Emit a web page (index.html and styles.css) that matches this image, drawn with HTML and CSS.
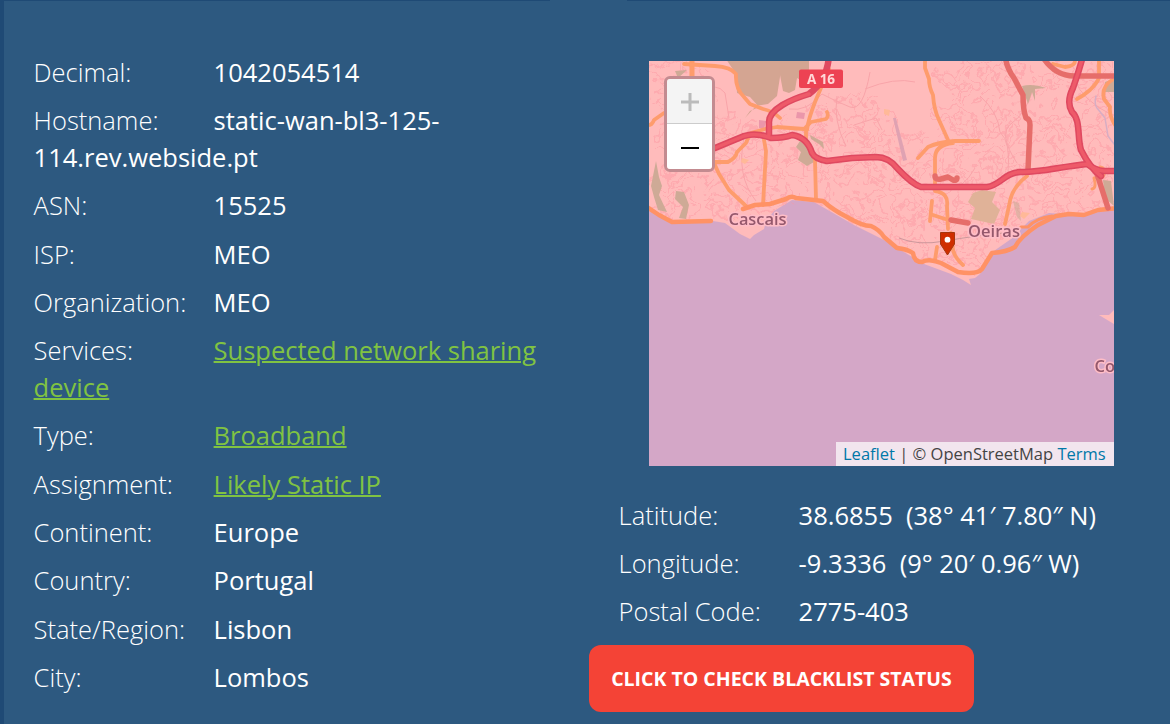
FILE: index.html
```
<!DOCTYPE html>
<html lang="en">
<head>
<meta charset="utf-8">
<title>IP Details</title>
<link rel="stylesheet" href="styles.css">
</head>
<body>
<main class="panel">
  <section class="details">
    <p class="row"><span class="label">Decimal:</span><span>1042054514</span></p>
    <p class="row"><span class="label">Hostname:</span><span>static-wan-bl3-125-<br>114.rev.webside.pt</span></p>
    <p class="row"><span class="label">ASN:</span><span>15525</span></p>
    <p class="row"><span class="label">ISP:</span><span>MEO</span></p>
    <p class="row"><span class="label">Organization:</span><span>MEO</span></p>
    <p class="row"><span class="label">Services:</span><a href="#">Suspected network sharing device</a></p>
    <p class="row"><span class="label">Type:</span><a href="#">Broadband</a></p>
    <p class="row"><span class="label">Assignment:</span><a href="#">Likely Static IP</a></p>
    <p class="row"><span class="label">Continent:</span><span>Europe</span></p>
    <p class="row"><span class="label">Country:</span><span>Portugal</span></p>
    <p class="row"><span class="label">State/Region:</span><span>Lisbon</span></p>
    <p class="row"><span class="label">City:</span><span>Lombos</span></p>
  </section>
  <section class="location">
    <div class="map">
      <svg class="tiles" width="465" height="405" viewBox="0 0 465 405">
        <defs>
          <pattern id="streets" width="47" height="43" patternUnits="userSpaceOnUse">
            <path d="M2 5l8 3 3 8-5 6 7 5 9-3 2 9-8 6M10 8l9-5 8 4 1 9-8 5-7-5M27 7l9-3 7 6-4 7 6 6-8 5-5-4-4 5-6-4M37 28l5 6-6 6-7-5 3-7M5 29l-3 6 7 4 6-5M20 21l5 3M36 12l-5 4" fill="none" stroke="#fc98a2" stroke-width="2"/>
          </pattern>
          <filter id="warp" x="0" y="0" width="1" height="1">
            <feTurbulence type="fractalNoise" baseFrequency=".045" numOctaves="3" seed="4"/>
            <feDisplacementMap in="SourceGraphic" scale="46" xChannelSelector="R" yChannelSelector="G"/>
            <feGaussianBlur stdDeviation=".5"/>
          </filter>
          <filter id="soft" x="0" y="0" width="1" height="1"><feGaussianBlur stdDeviation=".55"/></filter>
          <clipPath id="land"><path d="M0 0H465V148L428 154 400 152 380 157 360 172 342 191 330 217 316 221 293 211 275 203 235 179 205 164 165 141 130 145 105 171 92 171 76 161 58 161 22 160 0 148Z"/></clipPath>
        </defs>
        <rect width="465" height="405" fill="#d4a7c7"/>
        <g filter="url(#soft)">
        <path d="M-5 -5H470V148L428 154 400 152 380 160 362 178 342 192 331 213 326 217 320 218 322 224 314 219 302 213 275 203 235 179 205 164 165 141 143 139 125 150 117 160 115 168 105 174 101 178 91 173 76 162 64 160 22 160 -5 146Z" fill="#ffbbbb"/>
        <g clip-path="url(#land)">
          <g fill="url(#streets)" opacity=".45" filter="url(#warp)">
            <path d="M0 60L65 55 160 70 155 133 105 172 62 160 18 160 0 145Z"/>
            <path d="M160 42L220 28 255 60 290 95 315 215 275 205 162 137Z"/>
            <path d="M290 0H465V155L365 170 330 215 290 205Z"/>
            <path d="M0 0H50L80 55 0 80Z"/>
          </g>
          <g fill="none" stroke="#f8a4a9" stroke-width="1">
            <path d="M58 33q8-13 18-1l4 25M140 48q18 3 33-15q15 8 28 13t20-35M188 35q-4 25 9 50M216 28q30-12 50-7M205 64l22-7 6 12M331 35q18 16 20 36q11 10 8 40M385 24q-7 28-22 38t5 40M425 18q9 22 38 36M326 107q-5 10-15 18M95 77q-8 38 12 63"/>
            <path d="M250 177q19 8 46 3t68-9" stroke="#cc979b"/>
          </g>
          <g fill="#d4a592">
            <path d="M75 -5H133L131 16 128 35 119 43 107 45 96 57 101 50 110 46 101 36 88 32 87 13Z"/>
            <path d="M130 -5H160V25L153 20 148 17 146 29 140 32 134 30 131 14Z"/>
          </g>
          <g fill="#ceaa96">
            <path d="M7 100L10 116 13 125 10 134 18 151 9 149 5 136 2 125Z"/>
            <path d="M27 130L35 131 40 144 37 158 30 157 34 146 26 138Z"/>
            <path d="M151 80L162 88 165 101 158 105 149 99 152 91 147 86Z"/>
            <path d="M26 10L38 9 29 17Z"/>
            <path d="M161 74l13 7 1 7-5-5-8-5Z"/>
            <path d="M373 25Q384 22 397 27L386 28 386 40 383 31 379 43 376 34Z"/>
            <path d="M456 21L470 16V31H456ZM454 119L462 120 465 145 456 137Z"/>
            <path d="M364 140l6 2 2 18-4-4Z" opacity=".6"/>
          </g>
          <path d="M324 132L333 129 347 131 343 141 351 149 345 163 322 158 326 147 319 141Z" fill="#e0b298"/>
          <path d="M244 57l3 0 11 42-4 1Z" fill="#dfa2b2"/>
          <path d="M148 51l8 1-1 6-8-1ZM110 59l7 1-2 8-5-1Z" fill="#eb96aa"/>
          <path d="M235 48l6 1-1 6-5-2ZM93 97l7 2-4 4-4-2ZM373 151l8 1-6 6-4-3Z" fill="#ffb998"/>
        </g>
        <g fill="none" stroke-linecap="round" stroke-linejoin="round">
          <g stroke="#fe9c6c" stroke-width="3.8">
            <path d="M43 -5V18" stroke-width="5"/>
            <path d="M35 3L66 5Q82 6 87 13Q86 27 95 36L101 43 114 48Q124 50 131 57"/>
            <path d="M0 64Q3 64 5 59L15 52M66 101L79 101Q87 97 88 91L97 82Q99 76 102 72L116 68 128 66 155 68 162 61 177 58Q180 55 178 51"/>
            <path d="M180 8L166 41Q159 59 158 69M157 69L157 79 166 99 167 139"/>
            <path d="M115 79L117 90 114 144M66 104L70 113 80 129 97 145"/>
            <path d="M269 97L279 86Q290 81 306 80L330 80M304 82Q286 84 286 97L286 130Q300 132 298 145L299 168M276 -5V7L280 18Q280 26 284 34 285 49 290 59L299 79M283 140L281 160M284 154L299 159"/>
            <path d="M378 115Q362 127 360 145L356 163M450 -5L450 17Q448 22 441 29 434 35 428 38M463 19Q452 26 455 38L461 46Q460 56 468 67"/>
            <path d="M404 3L416 6Q426 5 426 0M288 186L286 199M302 172L304 189Q306 197 314 204"/>
            <path d="M451 106Q458 107 454 116L445 117Q448 127 443 128" stroke-width="3"/>
          </g>
          <g stroke="#ff9265" stroke-width="4.5">
            <path d="M-5 144L10 154 23 161 62 160M94 148L106 144 121 143 137 138Q142 134 147 137L174 140Q184 149 198 156 213 165 222 165 231 169 235 176L248 187Q258 188 264 192 265 201 273 201 280 197 292 202L309 211Q328 214 333 208L343 192Q358 191 366 186 371 176 389 164L407 155 420 153 435 154 449 149 470 147"/>
            <path d="M372 166L379 166Q387 157 403 155" stroke-width="3.2"/>
          </g>
          <g stroke="#e66d6a" stroke-width="5.5">
            <path d="M356 -5Q358 8 365 17L374 34Q374 49 377 57 381 58 381 64L379 109M395 -2Q407 15 425 15L470 15M286 115Q286 119 292 118L299 116 304 119Q308 120 308 117M302 159L319 162M448 113L459 147"/>
          </g>
          <g id="motorway">
            <path class="edge" d="M180 -5Q178 20 160 33C143 38 119 48 120 62V74"/>
            <path class="edge" d="M66 87L95 75Q107 71 122 77 135 77 143 74 158 76 163 92 166 98 178 100L203 97 227 96Q240 96 249 108 263 123 272 126L338 126C352 124 355 112 371 111 388 112 410 106 438 103Q446 109 455 110H470"/>
            <path class="edge" d="M434 -5Q430 10 424 27 417 41 423 51C432 59 428 77 432 89Q441 107 452 115"/>
            <path class="core" d="M160 33C143 38 119 48 120 62V74M66 87L95 75Q107 71 122 77 135 77 143 74 158 76 163 92 166 98 178 100L203 97 227 96Q240 96 249 108 263 123 272 126L338 126C352 124 355 112 371 111 388 112 410 106 438 103Q446 109 455 110H470M434 -5Q430 10 424 27 417 41 423 51C432 59 428 77 432 89Q441 107 452 115"/>
          </g>
          <path d="M447 35q-2 8 1 12l8 10 3 18 6 8" stroke="#d7adc4" stroke-width="1.500"/>
        </g>
        <rect x="150" y="8.500" width="44" height="18.500" rx="2" fill="#ed4352"/>
        <path d="M450 254L460 254 470 244V266Z" fill="#ffbbbb"/>
        </g>
        <g filter="url(#soft)">
          <text class="shield" x="158" y="22.500" textLength="28">A 16</text>
          <text class="place" x="79.500" y="163.500" textLength="58">Cascais</text>
          <text class="place" x="319" y="175.500" textLength="52">Oeiras</text>
          <text class="place" x="445.500" y="310.500">Co</text>
        </g>
        <path d="M291.500 171.500H305.500V183L298.500 194 291.500 183Z" fill="#cf2e00" stroke="#a5370f" stroke-width="1"/>
        <circle cx="298.500" cy="178.700" r="2.900" fill="#fff"/>
      </svg>
      <div class="zoom">
        <span class="zoom-btn off"><svg width="20" height="20" viewBox="0 0 20 20"><path d="M1 10H19M10 1V19"/></svg></span>
        <span class="zoom-btn"><svg width="20" height="20" viewBox="0 0 20 20"><path d="M1 10H19"/></svg></span>
      </div>
      <div class="credit"><a href="#">Leaflet</a> | © OpenStreetMap <a href="#">Terms</a></div>
    </div>
    <div class="coords">
      <p class="row"><span class="label">Latitude:</span><span>38.6855&nbsp; (38° 41′ 7.80″ N)</span></p>
      <p class="row"><span class="label">Longitude:</span><span>-9.3336&nbsp; (9° 20′ 0.96″ W)</span></p>
      <p class="row"><span class="label">Postal Code:</span><span>2775-403</span></p>
    </div>
    <button class="check">CLICK TO CHECK BLACKLIST STATUS</button>
  </section>
</main>
</body>
</html>
```
FILE: styles.css
```
* { box-sizing: border-box; }
body {
  margin: 0;
  height: 724px;
  overflow: hidden;
  background: linear-gradient(90deg, #1f4a75 550px, #2d5980 550px, #2d5980 627px, #1f4a75 627px);
  color: #fff;
  font: 400 25.500px/36.860px "Open Sans", sans-serif;
}
.panel {
  display: grid;
  grid-template-columns: 555px 611px;
  margin: 1px 0 0 4px;
  height: 723px;
  background: #2d5980;
}
.details { padding: 53px 0 0 29.600px; }
.row { margin: 0 0 11.430px; }
.label { display: inline-block; width: 180px; font-weight: 300; }
.row a { color: #80c342; text-decoration-thickness: 2px; }
.location { padding: 60px 0 0 30px; }
.map {
  position: relative;
  width: 465px;
  height: 405px;
  margin-left: 60px;
  overflow: hidden;
}
.tiles { display: block; }
.edge { stroke: #df4860; stroke-width: 6.500; }
.core { stroke: #ee5a69; stroke-width: 3.500; }
.place {
  font: 600 16.500px "Open Sans", sans-serif;
  fill: #95586c;
  stroke: #ffbdc7;
  stroke-width: 3px;
  paint-order: stroke;
}
.shield { font: 700 13.500px "Open Sans", sans-serif; fill: #ffd8d8; }
.zoom {
  position: absolute;
  left: 15px;
  top: 15px;
  width: 51px;
  border: 3px solid #c38b90;
  border-radius: 6px;
  overflow: hidden;
}
.zoom-btn {
  display: flex;
  align-items: center;
  justify-content: center;
  height: 45px;
  padding-top: 2px;
  background: #fff;
  stroke: #000;
  stroke-width: 2;
}
.off { background: #f4f4f4; stroke: #bbb; stroke-width: 3; border-bottom: 1px solid #ccc; }
.credit {
  position: absolute;
  right: 0;
  bottom: 0;
  width: 278px;
  height: 24px;
  padding-left: 7px;
  background: rgba(255, 255, 255, .7);
  color: #444;
  font-size: 16.500px;
  line-height: 24px;
  white-space: nowrap;
}
.credit a { color: #0078a8; text-decoration: none; }
.coords { padding: 30.600px 0 0 29.600px; }
.check {
  display: block;
  width: 385px;
  height: 67px;
  margin-top: 15px;
  padding: 0 0 1px;
  border: 0;
  border-radius: 12px;
  background: #f44336;
  color: #fff;
  font: 700 19.500px "Open Sans", sans-serif;
}
```
